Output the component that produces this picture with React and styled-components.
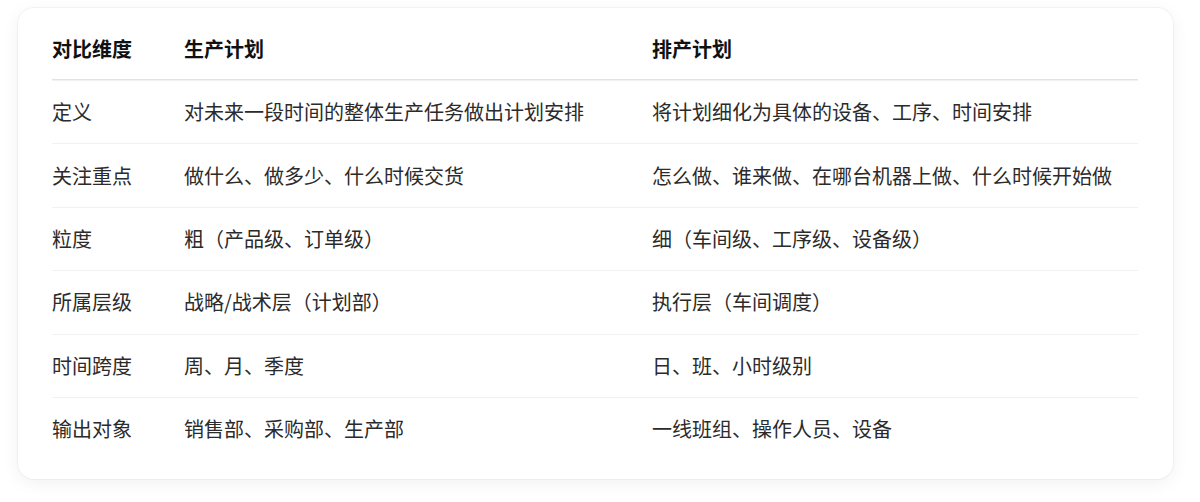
import React from "react";
import styled, { createGlobalStyle } from "styled-components";

const GlobalStyle = createGlobalStyle`
  html, body {
    margin: 0;
    padding: 0;
    background: #ffffff;
  }
  body {
    font-family: "Noto Sans CJK SC", "Noto Sans", sans-serif;
    -webkit-font-smoothing: antialiased;
  }
`;

const Page = styled.div`
  padding: 8px 27px 24px 18px;
`;

const Card = styled.div`
  background: #ffffff;
  border-radius: 16px;
  box-shadow: 0 0 0 1px rgba(0, 0, 0, 0.035), 0 4px 18px rgba(0, 0, 0, 0.06);
  padding: 10px 35px 19px 34px;
`;

const Row = styled.div`
  display: grid;
  grid-template-columns: 132px 468px 1fr;
  align-items: center;
  border-top: ${(p) => (p.$header ? "none" : "1px solid #f1f1f1")};
  border-bottom: ${(p) => (p.$header ? "1px solid #e2e2e2" : "none")};
  padding: ${(p) => (p.$header ? "16px 0 15px" : "16.2px 0")};
  & + & {
    border-top: ${(p) => (p.$first ? "none" : "1px solid #f1f1f1")};
  }
`;

const Cell = styled.div`
  font-size: 20px;
  line-height: 30px;
  color: ${(p) => (p.$header ? "#111111" : "#2b2b2b")};
  font-weight: ${(p) => (p.$header ? 700 : 400)};
  white-space: nowrap;
`;

const header = ["对比维度", "生产计划", "排产计划"];

const rows = [
  ["定义", "对未来一段时间的整体生产任务做出计划安排", "将计划细化为具体的设备、工序、时间安排"],
  ["关注重点", "做什么、做多少、什么时候交货", "怎么做、谁来做、在哪台机器上做、什么时候开始做"],
  ["粒度", "粗（产品级、订单级）", "细（车间级、工序级、设备级）"],
  ["所属层级", "战略/战术层（计划部）", "执行层（车间调度）"],
  ["时间跨度", "周、月、季度", "日、班、小时级别"],
  ["输出对象", "销售部、采购部、生产部", "一线班组、操作人员、设备"],
];

export default function App() {
  return (
    <>
      <GlobalStyle />
      <Page>
        <Card>
          <Row $header>
            {header.map((h) => (
              <Cell key={h} $header>
                {h}
              </Cell>
            ))}
          </Row>
          {rows.map((r, i) => (
            <Row key={r[0]} $first={i === 0}>
              {r.map((c, j) => (
                <Cell key={j}>{c}</Cell>
              ))}
            </Row>
          ))}
        </Card>
      </Page>
    </>
  );
}
